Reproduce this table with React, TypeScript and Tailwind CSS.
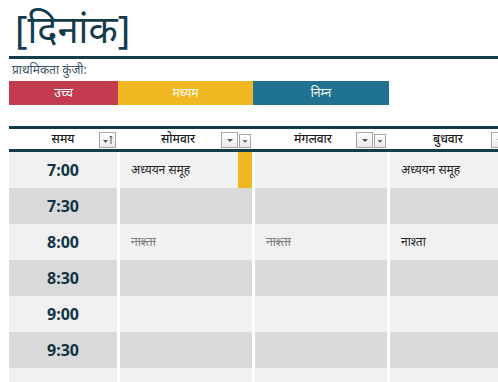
const days = ["सोमवार", "मंगलवार", "बुधवार"];

type Cell = { text?: string; struck?: boolean; flag?: boolean };

const rows: { time: string; cells: Cell[] }[] = [
  { time: "7:00", cells: [{ text: "अध्ययन समूह", flag: true }, {}, { text: "अध्ययन समूह" }] },
  { time: "7:30", cells: [{}, {}, {}] },
  { time: "8:00", cells: [{ text: "नाश्ता", struck: true }, { text: "नाश्ता", struck: true }, { text: "नाश्ता" }] },
  { time: "8:30", cells: [{}, {}, {}] },
  { time: "9:00", cells: [{}, {}, {}] },
  { time: "9:30", cells: [{}, {}, {}] },
  { time: "", cells: [{}, {}, {}] },
];

const font = { fontFamily: "'Noto Sans', 'Noto Sans Devanagari', 'Segoe UI', sans-serif" };

function FilterButton({ sorted = false, small = false }: { sorted?: boolean; small?: boolean }) {
  return (
    <span
      className={`flex items-center justify-center border border-[#a6a6a6] bg-gradient-to-b from-white to-[#e9e9e9] ${
        small ? "h-[14px] w-[12px]" : "h-[16px] w-[17px]"
      }`}
    >
      <svg width="12" height="10" viewBox="0 0 12 10">
        <path d={sorted ? "M1 5h5l-2.5 3z" : "M3 4h6l-3 3z"} fill="#555" />
        {sorted && <path d="M9 1v8M7.6 2.6L9 1l1.4 1.6" stroke="#555" strokeWidth="1" fill="none" />}
      </svg>
    </span>
  );
}

export default function App() {
  return (
    <div className="h-[382px] w-[498px] overflow-hidden bg-white pl-[9px]" style={font}>
      <h1 className="pl-[6px] pt-[2px] text-[38px] leading-[52px] text-[#133b4c]">[दिनांक]</h1>
      <div className="mt-[2px] h-[3px] bg-[#133d4a]" />
      <p className="pl-[3px] pt-[3px] text-[12px] leading-[16px] text-[#3a5464]">प्राथमिकता कुंजी:</p>
      <div className="mt-[3px] flex h-[24px] text-[12px] text-white">
        <div className="flex w-[109px] items-center justify-center bg-[#c43a4f]">उच्च</div>
        <div className="flex w-[135px] items-center justify-center bg-[#f0b722]">मध्यम</div>
        <div className="flex w-[136px] items-center justify-center bg-[#1f7391]">निम्न</div>
      </div>

      <div className="mt-[21px] w-[540px] border-y-[3px] border-[#133d4a]">
        <div className="grid h-[20px] grid-cols-[108px_132px_132px_132px] gap-x-[3px] bg-white text-[12px] font-medium text-[#1a1a1a]">
          <div className="relative flex items-center justify-center">
            समय
            <span className="absolute right-[1px] top-[3px]">
              <FilterButton sorted />
            </span>
          </div>
          {days.map((d) => (
            <div key={d} className="relative flex items-center justify-center pr-[16px]">
              {d}
              <span className="absolute left-[101px] top-[3px] flex items-end">
                <FilterButton />
                <span className="ml-[1px] mt-[2px]">
                  <FilterButton small />
                </span>
              </span>
            </div>
          ))}
        </div>
      </div>

      <div className="w-[540px]">
        {rows.map((r, i) => (
          <div key={i} className="grid h-[36px] grid-cols-[108px_132px_132px_132px] gap-x-[3px]">
            <div
              className={`flex items-center justify-center text-[16px] font-bold text-[#133344] ${
                i % 2 === 0 ? "bg-[#f1f1f1]" : "bg-[#d9d9d9]"
              }`}
            >
              {r.time}
            </div>
            {r.cells.map((c, j) => (
              <div
                key={j}
                className={`relative flex items-center pl-[11px] text-[12px] ${
                  i % 2 === 0 ? "bg-[#f1f1f1]" : "bg-[#d9d9d9]"
                } ${c.struck ? "text-[#7f7f7f] line-through" : "text-[#262626]"}`}
              >
                {c.text}
                {c.flag && <span className="absolute right-0 top-0 h-full w-[14px] bg-[#f0b722]" />}
              </div>
            ))}
          </div>
        ))}
      </div>
    </div>
  );
}
